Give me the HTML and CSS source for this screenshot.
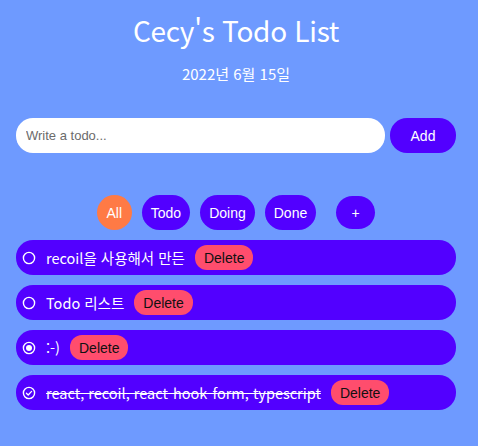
FILE: index.html
```html
<!DOCTYPE html>
<html lang="ko">
<head>
<meta charset="utf-8">
<link rel="stylesheet" href="styles.css">
</head>
<body>
<div class="app">
  <h1 class="title">Cecy's Todo List</h1>
  <div class="date">2022년 6월 15일</div>
  <form class="add-form">
    <input class="todo-input" type="text" placeholder="Write a todo...">
    <button class="add-btn" type="button">Add</button>
  </form>
  <div class="filters">
    <button class="chip chip-all" type="button">All</button>
    <button class="chip" type="button">Todo</button>
    <button class="chip" type="button">Doing</button>
    <button class="chip" type="button">Done</button>
    <button class="chip chip-plus" type="button">+</button>
  </div>
  <ul class="list">
    <li class="item">
      <svg class="icon" viewBox="0 0 14 14" width="14" height="14"><circle cx="7" cy="7" r="5.6" fill="none" stroke="#fff" stroke-width="1.4"/></svg>
      <span class="text">recoil을 사용해서 만든</span>
      <button class="del" type="button">Delete</button>
    </li>
    <li class="item">
      <svg class="icon" viewBox="0 0 14 14" width="14" height="14"><circle cx="7" cy="7" r="5.6" fill="none" stroke="#fff" stroke-width="1.4"/></svg>
      <span class="text">Todo 리스트</span>
      <button class="del" type="button">Delete</button>
    </li>
    <li class="item">
      <svg class="icon" viewBox="0 0 14 14" width="14" height="14"><circle cx="7" cy="7" r="5.6" fill="none" stroke="#fff" stroke-width="1.4"/><circle cx="7" cy="7" r="3" fill="#fff"/></svg>
      <span class="text">:-)</span>
      <button class="del" type="button">Delete</button>
    </li>
    <li class="item">
      <svg class="icon" viewBox="0 0 14 14" width="14" height="14"><circle cx="7" cy="7" r="5.6" fill="none" stroke="#fff" stroke-width="1.4"/><path d="M4.4 7.2 L6.2 9 L9.6 5.4" fill="none" stroke="#fff" stroke-width="1.3" stroke-linecap="round" stroke-linejoin="round"/></svg>
      <span class="text done">react, recoil, react-hook-form, typescript</span>
      <button class="del" type="button">Delete</button>
    </li>
  </ul>
</div>
</body>
</html>
```
FILE: styles.css
```css
html, body {
  margin: 0;
  padding: 0;
}
body {
  background: #6e9aff;
  font-family: "Noto Sans CJK KR", "Noto Sans", sans-serif;
  color: #fff;
  width: 478px;
  height: 446px;
  overflow: hidden;
}
.app {
  width: 440px;
  margin-left: 16px;
  display: flex;
  flex-direction: column;
  align-items: center;
}
.title {
  margin: 10px 0 0;
  font-size: 28px;
  font-weight: 400;
  line-height: 40px;
  letter-spacing: -0.3px;
}
.date {
  margin-top: 14px;
  font-size: 15px;
  line-height: 20px;
}
.add-form {
  margin: 34px 0 0;
  width: 100%;
  display: flex;
  gap: 5px;
}
.todo-input {
  flex: 1;
  height: 35px;
  box-sizing: border-box;
  border: none;
  border-radius: 17px;
  padding: 0 10px;
  font-family: "Liberation Sans", Arial, sans-serif;
  font-size: 13px;
  outline: none;
  background: #fff;
}
.todo-input::placeholder {
  color: #6b6b6b;
}
.add-btn {
  width: 66px;
  height: 35px;
  border: none;
  border-radius: 17px;
  background: #5200ff;
  color: #fff;
  font-family: "Liberation Sans", Arial, sans-serif;
  font-size: 14px;
  padding: 0;
}
.filters {
  margin-top: 42px;
  display: flex;
  gap: 10px;
}
.chip {
  height: 35px;
  border: none;
  border-radius: 18px;
  background: #5200ff;
  color: #fff;
  font-family: "Liberation Sans", Arial, sans-serif;
  font-size: 14px;
  padding: 0 9px;
}
.chip-all {
  background: #ff7a45;
  width: 35px;
  padding: 0;
}
.chip-plus {
  margin-left: 10px;
  width: 39px;
  height: 33px;
  margin-top: 1px;
  padding: 0;
}
.list {
  list-style: none;
  margin: 10px 0 0;
  padding: 0;
  width: 100%;
  display: flex;
  flex-direction: column;
  gap: 10px;
}
.item {
  height: 35px;
  background: #5200ff;
  border-radius: 17px;
  display: flex;
  align-items: center;
  padding-left: 6px;
}
.icon {
  display: block;
  margin-right: 10px;
}
.text {
  font-size: 14.5px;
  line-height: 20px;
  margin-right: 10px;
}
.text.done {
  text-decoration: line-through;
}
.del {
  height: 25px;
  border: none;
  border-radius: 12px;
  background: #ff4d6d;
  color: #111;
  font-family: "Liberation Sans", Arial, sans-serif;
  font-size: 14px;
  padding: 0 9px;
}
```
